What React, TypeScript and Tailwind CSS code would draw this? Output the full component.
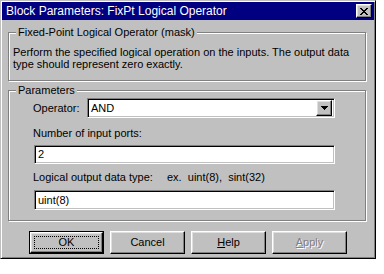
import React from 'react';

const font = { fontFamily: '"Liberation Sans", Arial, sans-serif' };

const sunken =
  'border border-t-[#808080] border-l-[#808080] border-r-white border-b-white shadow-[inset_1px_1px_0_#000,inset_-1px_-1px_0_#c0c0c0] bg-white';

const raised =
  'border border-t-white border-l-white border-r-black border-b-black shadow-[inset_-1px_-1px_0_#808080,inset_1px_1px_0_#dfdfdf] bg-[#c0c0c0]';

function CloseGlyph() {
  const px = [
    [0, 0], [1, 0], [6, 0], [7, 0],
    [1, 1], [2, 1], [5, 1], [6, 1],
    [2, 2], [3, 2], [4, 2], [5, 2],
    [3, 3], [4, 3],
    [2, 4], [3, 4], [4, 4], [5, 4],
    [1, 5], [2, 5], [5, 5], [6, 5],
    [0, 6], [1, 6], [6, 6], [7, 6],
  ];
  return (
    <svg width="8" height="7" viewBox="0 0 8 7" shapeRendering="crispEdges">
      {px.map(([x, y]) => (
        <rect key={`${x}-${y}`} x={x} y={y} width="1" height="1" fill="#000" />
      ))}
    </svg>
  );
}

function GroupBox({ title, className, children }: { title: string; className: string; children: React.ReactNode }) {
  return (
    <div
      className={`relative border border-[#808080] shadow-[inset_1px_1px_0_#fff,1px_1px_0_#fff] ${className}`}
    >
      <span className="absolute -top-[7px] left-[7px] px-[2px] bg-[#c0c0c0] text-[11px] leading-[13px] text-black">
        {title}
      </span>
      {children}
    </div>
  );
}

function Button({ children, isDefault = false, disabled = false }: { children: React.ReactNode; isDefault?: boolean; disabled?: boolean }) {
  if (isDefault) {
    return (
      <div className="w-[75px] h-[23px] border border-black">
        <div className={`${raised} w-full h-full flex items-center justify-center p-[3px]`}>
          <div className="w-full h-full border border-dotted border-black flex items-center justify-center text-[11px] text-black">
            {children}
          </div>
        </div>
      </div>
    );
  }
  return (
    <div
      className={`${raised} w-[75px] h-[23px] flex items-center justify-center text-[11px] ${
        disabled ? 'text-[#808080] [text-shadow:1px_1px_0_#fff]' : 'text-black'
      }`}
    >
      {children}
    </div>
  );
}

export default function App() {
  return (
    <div className="w-[384px] h-[274px] bg-white" style={font}>
      <div className="w-[376px] h-[259px] bg-[#c0c0c0] border border-t-[#c0c0c0] border-l-[#c0c0c0] border-r-black border-b-black shadow-[inset_1px_1px_0_#fff,inset_-1px_-1px_0_#808080] p-[1px] flex flex-col">
        <div className="h-[18px] bg-[#000080] flex items-center justify-between pl-[4px] pr-[2px]">
          <span className="text-white text-[12px] leading-[14px]">Block Parameters: FixPt Logical Operator</span>
          <div className={`${raised} w-[16px] h-[14px] flex items-center justify-center`}>
            <CloseGlyph />
          </div>
        </div>

        <GroupBox title="Fixed-Point Logical Operator (mask)" className="mt-[12px] ml-[6px] w-[358px] h-[49px]">
          <p className="pt-[13px] pl-[4px] text-[11px] leading-[12px] text-black">
            Perform the specified logical operation on the inputs. The output data
            <br />
            type should represent zero exactly.
          </p>
        </GroupBox>

        <GroupBox title="Parameters" className="mt-[9px] ml-[6px] w-[358px] h-[131px]">
          <div className="pt-[7px] pl-[24px] flex flex-col text-[11px] leading-[13px] text-black">
            <div className="flex items-center">
              <span className="w-[54px]">Operator:</span>
              <div className={`${sunken} w-[248px] h-[20px] flex items-center justify-between pl-[3px] pr-[2px]`}>
                <span>AND</span>
                <div className={`${raised} w-[16px] h-[16px] flex items-center justify-center`}>
                  <svg width="7" height="4" viewBox="0 0 7 4" shapeRendering="crispEdges">
                    <path d="M0 0h7v1h-1v1h-1v1h-1v1h-1v-1h-1v-1h-1v-1h-1z" fill="#000" />
                  </svg>
                </div>
              </div>
            </div>
            <span className="mt-[9px]">Number of input ports:</span>
            <div className={`${sunken} mt-[5px] ml-[1px] w-[301px] h-[19px] flex items-center pl-[3px]`}>2</div>
            <div className="mt-[7px] flex">
              <span className="w-[134px]">Logical output data type:</span>
              <span>ex.&nbsp; uint(8),&nbsp; sint(32)</span>
            </div>
            <div className={`${sunken} mt-[6px] ml-[1px] w-[301px] h-[20px] flex items-center pl-[3px]`}>uint(8)</div>
          </div>
        </GroupBox>

        <div className="mt-[10px] ml-[27px] flex gap-[6px]">
          <Button isDefault>OK</Button>
          <Button>Cancel</Button>
          <Button>
            <span className="underline">H</span>elp
          </Button>
          <Button disabled>
            <span className="underline">A</span>pply
          </Button>
        </div>
      </div>
    </div>
  );
}
